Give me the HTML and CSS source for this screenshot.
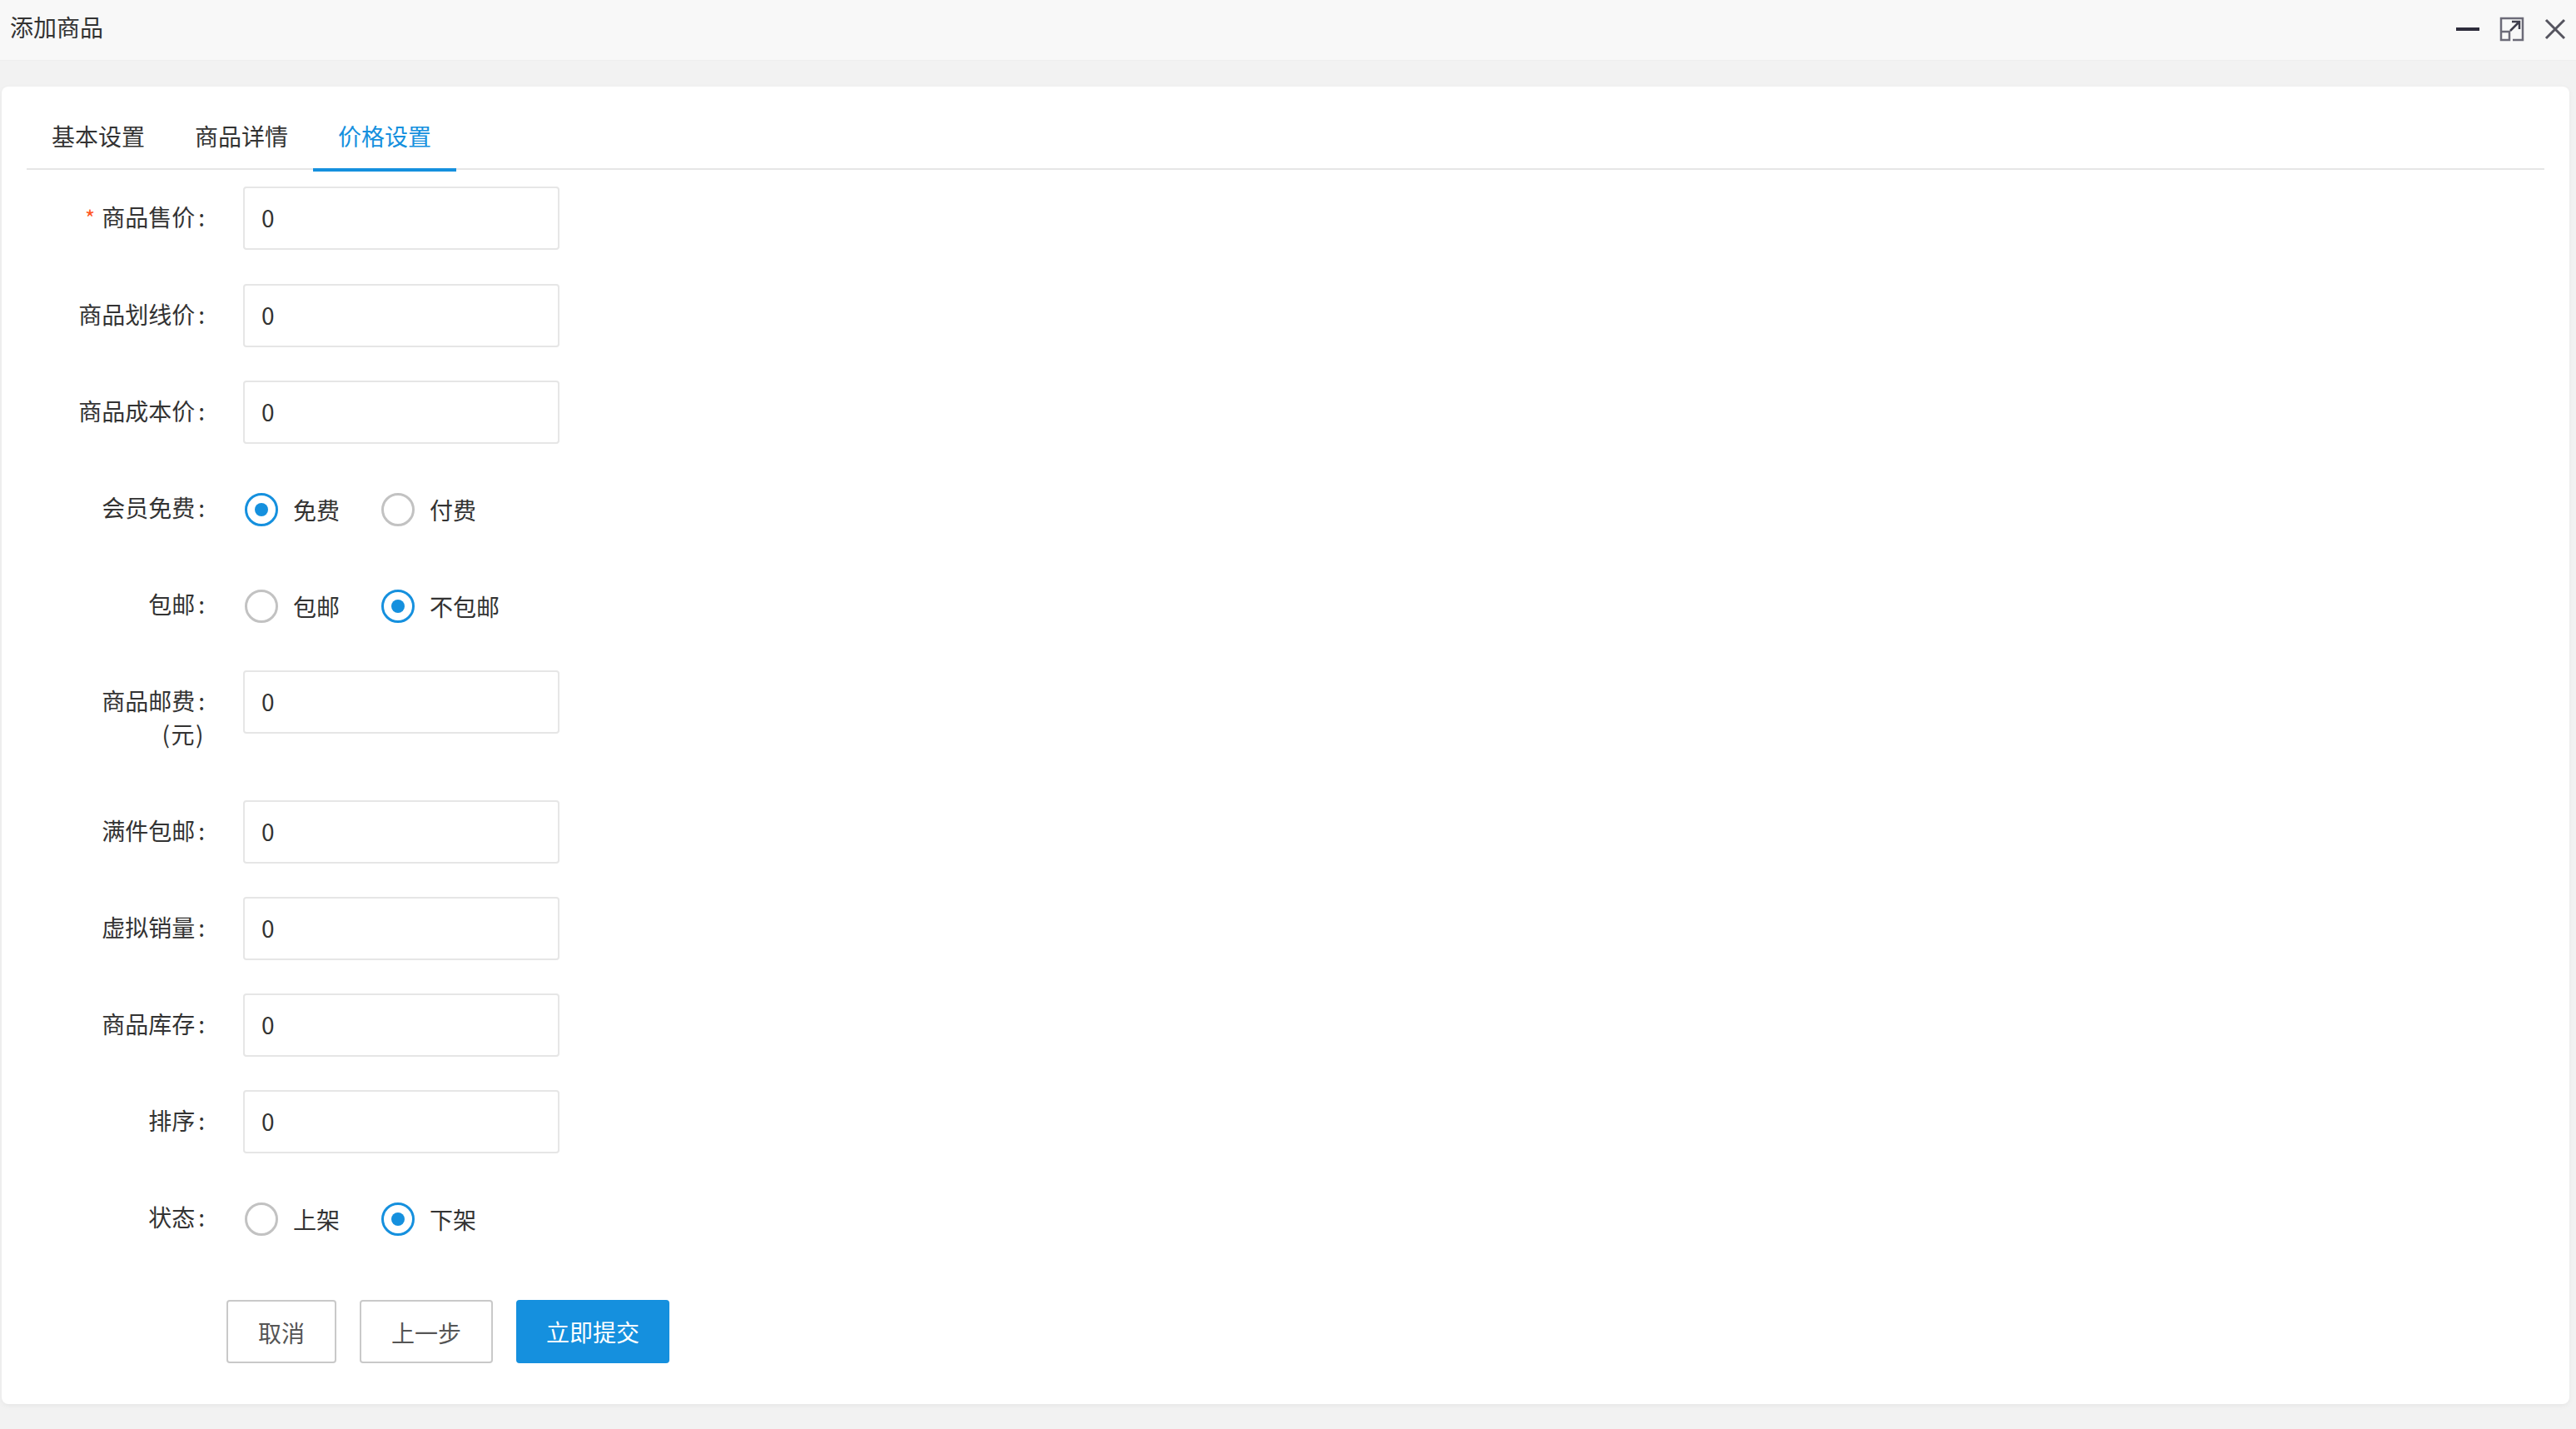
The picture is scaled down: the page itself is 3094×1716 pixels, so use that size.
FILE: index.html
```html
<!DOCTYPE html>
<html lang="zh-CN">
<head>
<meta charset="utf-8">
<title>添加商品</title>
<link rel="stylesheet" href="styles.css">
</head>
<body>
<header class="titlebar">
  <span class="title">添加商品</span>
  <div class="win-actions">
    <svg class="win-min" width="28" height="4" viewBox="0 0 28 4"><rect width="28" height="4" fill="#2e2d3c"/></svg>
    <svg class="win-max" width="30" height="30" viewBox="0 0 30 30" fill="none">
      <path d="M2 17V2H28V28H16" stroke="#6c6b78" stroke-width="2.5"/>
      <rect x="2" y="18" width="10" height="10" stroke="#6c6b78" stroke-width="2.5"/>
      <path d="M13 17L24 6M15 6H24V15" stroke="#3f3e4d" stroke-width="2.5"/>
    </svg>
    <svg class="win-close" width="26" height="26" viewBox="0 0 26 26" fill="none"><path d="M2 2L24 24M24 2L2 24" stroke="#55545f" stroke-width="3"/></svg>
  </div>
</header>
<main class="card">
  <nav class="tabs">
    <span class="tab">基本设置</span>
    <span class="tab">商品详情</span>
    <span class="tab tab-active">价格设置</span>
  </nav>
  <form class="form">
    <div class="row"><label class="label"><i class="req">*</i>商品售价<span class="colon">:</span></label><input class="input" value="0"></div>
    <div class="row"><label class="label">商品划线价<span class="colon">:</span></label><input class="input" value="0"></div>
    <div class="row"><label class="label">商品成本价<span class="colon">:</span></label><input class="input" value="0"></div>
    <div class="row"><label class="label">会员免费<span class="colon">:</span></label>
      <div class="radios">
        <span class="radio radio-on"><b class="dot"></b>免费</span>
        <span class="radio"><b class="dot"></b>付费</span>
      </div></div>
    <div class="row"><label class="label">包邮<span class="colon">:</span></label>
      <div class="radios">
        <span class="radio"><b class="dot"></b>包邮</span>
        <span class="radio radio-on"><b class="dot"></b>不包邮</span>
      </div></div>
    <div class="row"><label class="label">商品邮费<span class="colon">:</span><br><span class="unit">(元)</span></label><input class="input" value="0"></div>
    <div class="row"><label class="label">满件包邮<span class="colon">:</span></label><input class="input" value="0"></div>
    <div class="row"><label class="label">虚拟销量<span class="colon">:</span></label><input class="input" value="0"></div>
    <div class="row"><label class="label">商品库存<span class="colon">:</span></label><input class="input" value="0"></div>
    <div class="row"><label class="label">排序<span class="colon">:</span></label><input class="input" value="0"></div>
    <div class="row"><label class="label">状态<span class="colon">:</span></label>
      <div class="radios">
        <span class="radio"><b class="dot"></b>上架</span>
        <span class="radio radio-on"><b class="dot"></b>下架</span>
      </div></div>
    <div class="actions">
      <span class="btn">取消</span>
      <span class="btn">上一步</span>
      <span class="btn btn-primary">立即提交</span>
    </div>
  </form>
</main>
</body>
</html>
```
FILE: styles.css
```css
* { box-sizing: border-box; }
html, body { margin: 0; height: 100%; }
body {
  background: #f2f2f2;
  color: #333;
  font-family: "Noto Sans CJK SC", "Noto Sans", sans-serif;
  font-size: 28px;
  overflow: hidden;
}
.titlebar {
  height: 73px;
  background: #f8f8f8;
  border-bottom: 1px solid #eee;
  display: flex;
  align-items: center;
  justify-content: space-between;
  padding: 0 12px 4px 12px;
}
.title { line-height: 60px; margin-top: -5px; }
.win-actions { display: flex; align-items: center; }
.win-min { margin-right: 24px; margin-top: 2px; }
.win-max { margin-right: 24px; margin-top: 2px; }
.win-close { margin-top: 2px; }
.card {
  margin: 31px 8px 0 2px;
  height: 1582px;
  background: #fff;
  border-radius: 8px;
  box-shadow: 0 2px 6px rgba(0,0,0,.05);
  padding: 20px 30px 0;
}
.tabs {
  display: flex;
  height: 80px;
  border-bottom: 2px solid #e6e6e6;
}
.tab {
  width: 172px;
  height: 82px;
  text-align: center;
  line-height: 78px;
}
.tab-active {
  color: #1590de;
  border-bottom: 4px solid #1590de;
}
.form { padding-top: 20px; }
.row {
  display: flex;
  align-items: flex-start;
  margin-bottom: 40px;
}
.label {
  width: 214px;
  flex: none;
  padding: 16px 0 20px;
  line-height: 40px;
  text-align: right;
}
.colon { margin-left: 4px; }
.unit { letter-spacing: 1.5px; }
.req { color: #ff5722; font-style: normal; margin-right: 8px; font-size: 26px; }
.input {
  width: 380px;
  height: 76px;
  margin-left: 46px;
  border: 2px solid #e6e6e6;
  border-radius: 4px;
  padding: 0 20px 3px;
  font: inherit;
  color: #333;
  background: #fff;
  outline: none;
}
.radios {
  display: flex;
  margin-left: 48px;
  height: 76px;
  padding-top: 2px;
  align-items: center;
}
.radio {
  display: flex;
  align-items: center;
  min-width: 164px;
}
.dot {
  width: 40px;
  height: 40px;
  border: 3px solid #c2c2c2;
  border-radius: 50%;
  margin-right: 18px;
  display: block;
  position: relative;
}
.radio-on .dot { border-color: #1590de; }
.radio-on .dot::after {
  content: "";
  position: absolute;
  top: 9px;
  left: 9px;
  width: 16px;
  height: 16px;
  border-radius: 50%;
  background: #1590de;
}
.actions {
  display: flex;
  gap: 28px;
  padding: 20px 0 0 240px;
}
.btn {
  height: 76px;
  line-height: 74px;
  padding: 0 36px;
  border: 2px solid #c9c9c9;
  border-radius: 4px;
  color: #555;
  background: #fff;
}
.btn-primary {
  background: #1590de;
  border-color: #1590de;
  color: #fff;
  padding: 0 34px;
  line-height: 72px;
}
```
